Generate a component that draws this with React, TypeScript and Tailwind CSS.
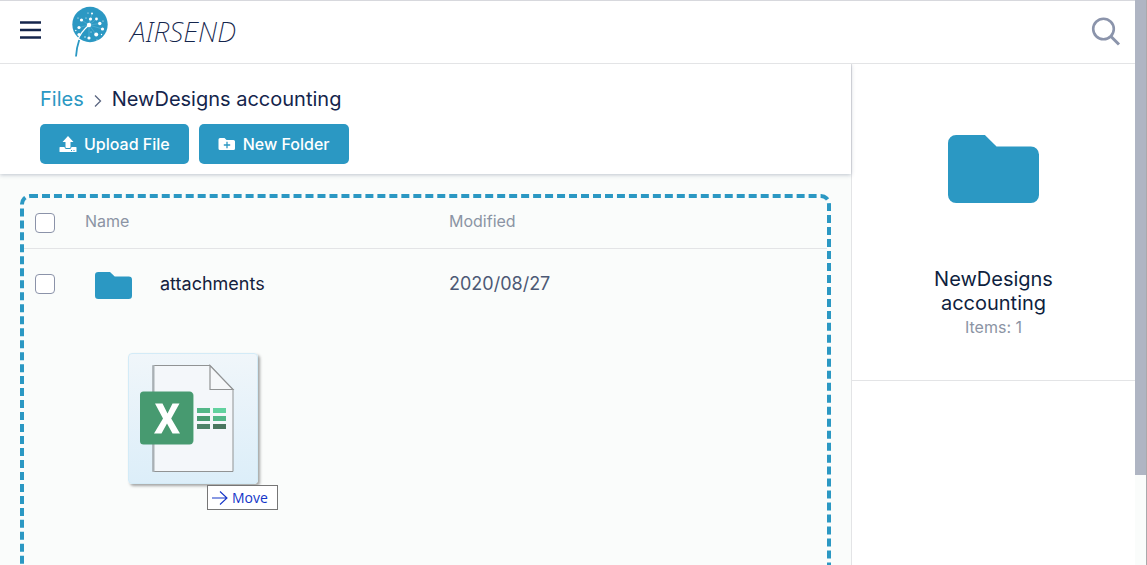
import type { ReactNode } from "react";

const files = [{ id: 1, name: "attachments", modified: "2020/08/27" }];

const seeds = [
  [10.5, 14, 1.6],
  [19.5, 13, 1.6],
  [25.5, 13, 1.4],
  [21, 7.5, 1],
  [28.8, 17.5, 1.7],
  [31.5, 23, 1.6],
  [25.2, 28.5, 2],
  [18, 32, 1.6],
  [8, 28.5, 1.6],
  [8, 21.5, 1.6],
];

const specks = [
  [4.8, 24.5, 0.7],
  [7, 12, 0.6],
  [15, 12, 0.6],
  [30.5, 28.5, 0.7],
  [26, 34, 0.6],
  [14, 31, 0.7],
  [17, 7, 0.6],
  [32, 15, 0.6],
  [20, 26, 0.5],
];

function Logo() {
  return (
    <svg width="38" height="51" viewBox="0 0 38 51" aria-hidden="true">
      <circle cx="19" cy="18.500" r="17.700" fill="#2b98c3" />
      <g stroke="#6cbbd8" strokeWidth="0.5">
        {seeds.map(([x, y]) => (
          <line key={`${x}-${y}`} x1="18" y1="19" x2={x} y2={y} />
        ))}
      </g>
      <g fill="#fff">
        {[...seeds, ...specks].map(([x, y, r]) => (
          <circle key={`${x}-${y}`} cx={x} cy={y} r={r} />
        ))}
        <circle cx="18" cy="19" r="2.200" />
      </g>
      <path d="M18 19C11 25 8 30 6.500 35" fill="none" stroke="#fff" strokeWidth="1.200" />
      <path d="M8.200 34C6.500 39 5.300 44 5 50.500" fill="none" stroke="#2b98c3" strokeWidth="1.800" />
    </svg>
  );
}

function FolderIcon({ className }: { className: string }) {
  return (
    <svg
      viewBox="0 0 90 68"
      className={className}
      preserveAspectRatio="none"
      fill="#2b98c3"
      aria-hidden="true"
    >
      <path d="M8 0H36.500L48 11.500H82A8 8 0 0 1 90 19.500V60A8 8 0 0 1 82 68H8A8 8 0 0 1 0 60V8A8 8 0 0 1 8 0Z" />
    </svg>
  );
}

function UploadIcon() {
  return (
    <svg width="18" height="16" viewBox="0 0 18 16" fill="#fff" aria-hidden="true">
      <path d="M9 0L14.500 6H11.500V11.200Q11.500 12 10.700 12H7.300Q6.500 12 6.500 11.200V6H3.500Z" />
      <path d="M1 11H5.500Q5.700 13 7.300 13H10.700Q12.300 13 12.500 11H17Q17.500 11 17.500 11.500V15.500Q17.500 16 17 16H1Q.5 16 .5 15.500V11.500Q.5 11 1 11Z" />
      <path d="M12 14h1v1h-1zM14.500 14h1v1h-1z" fill="#2b98c3" />
    </svg>
  );
}

function NewFolderIcon() {
  return (
    <svg width="18" height="16" viewBox="0 0 18 16" aria-hidden="true">
      <path
        d="M2 2H6.500L8.500 4H15.500Q17 4 17 5.500V12.500Q17 14 15.500 14H2Q.5 14 .5 12.500V3.500Q.5 2 2 2Z"
        fill="#fff"
      />
      <path d="M9 5.800V12.200M5.800 9H12.200" stroke="#2b98c3" strokeWidth="1.300" />
    </svg>
  );
}

function ActionButton({ icon, children }: { icon: ReactNode; children: ReactNode }) {
  return (
    <button
      type="button"
      className="flex h-10 items-center gap-[7px] rounded-[5px] bg-[#2b98c3] px-[19px] text-base font-medium text-white"
    >
      {icon}
      {children}
    </button>
  );
}

function Checkbox({ label }: { label: string }) {
  return (
    <input
      type="checkbox"
      aria-label={label}
      className="block size-5 appearance-none rounded border border-[#8b93a9] bg-white checked:bg-[#2b98c3]"
    />
  );
}

function Header() {
  return (
    <header className="relative z-20 flex h-16 shrink-0 items-center justify-between border-t border-b border-t-[#d7d8dd] border-b-[#e3e4e6] bg-white pr-3.5 pb-0.5 pl-5">
      <div className="flex items-center">
        <button type="button" aria-label="Menu" className="mr-7.5">
          <svg width="21" height="20" viewBox="0 0 21 20" stroke="#14254c" strokeWidth="2.400">
            <path d="M0 1.500H21M0 9H21M0 16.500H21" />
          </svg>
        </button>
        <a href="#" className="flex items-center gap-[21px]">
          <Logo />
          <span className="font-['Noto_Sans','Open_Sans',sans-serif] text-[28px] leading-8 font-extralight text-[#14254c] italic">
            AIRSEND
          </span>
        </a>
      </div>
      <button type="button" aria-label="Search">
        <svg width="30" height="30" viewBox="0 0 30 30" fill="none" stroke="#8b94ab">
          <circle cx="12.500" cy="13" r="10.300" strokeWidth="2.600" />
          <path d="M20 20.500L28 28.500" strokeWidth="3" />
        </svg>
      </button>
    </header>
  );
}

function Toolbar() {
  return (
    <div className="z-10 shrink-0 bg-white px-10 pt-[19px] pb-2.5 shadow-[0_1px_4px_rgba(20,37,76,0.25)]">
      <nav className="flex h-8 items-center text-xl">
        <a href="#" className="text-[#2b98c3]">
          Files
        </a>
        <svg width="8" height="14" viewBox="0 0 8 14" fill="none" className="mx-2.5 mt-1" aria-hidden="true">
          <path d="M1 1.500L6.500 7L1 12.500" stroke="#5b6680" strokeWidth="1.300" />
        </svg>
        <span className="text-[#14254c]">NewDesigns accounting</span>
      </nav>
      <div className="mt-[9px] flex gap-2.5">
        <ActionButton icon={<UploadIcon />}>Upload File</ActionButton>
        <ActionButton icon={<NewFolderIcon />}>New Folder</ActionButton>
      </div>
    </div>
  );
}

function FileTable() {
  return (
    <table className="w-full table-fixed text-left">
      <colgroup>
        <col className="w-[61px]" />
        <col className="w-[364px]" />
        <col />
      </colgroup>
      <thead>
        <tr className="h-[50px] border-b border-[#e3e4e6] text-base text-[#8b94a4]">
          <th className="pl-[11px]">
            <Checkbox label="Select all" />
          </th>
          <th className="pb-1 font-normal">Name</th>
          <th className="pb-1 font-normal">Modified</th>
        </tr>
      </thead>
      <tbody>
        {files.map((file) => (
          <tr key={file.id} className="h-[71px] text-lg">
            <td className="pl-[11px]">
              <Checkbox label={`Select ${file.name}`} />
            </td>
            <td className="text-[#14213d]">
              <a href="#" className="flex items-center pl-2.5">
                <FolderIcon className="mt-1 mr-7 h-[27px] w-[37px]" />
                {file.name}
              </a>
            </td>
            <td className="text-[#4c5975]">{file.modified}</td>
          </tr>
        ))}
      </tbody>
    </table>
  );
}

function DraggedFile() {
  return (
    <div className="absolute top-[179px] left-[128px] z-20">
      <div className="h-[131px] w-[130px] rounded-sm border border-[#d3ebf7] bg-linear-to-b from-[#f0f6fa] to-[#dceef9] shadow-[2px_2px_3px_rgba(0,0,0,0.35)]">
        <svg width="129" height="129" viewBox="0 0 129 129" aria-hidden="true">
          <path d="M24 11.500H81L104 35.500V117.500H24Z" fill="#f4f7fa" stroke="#919394" />
          <path d="M24.500 11V118" stroke="#a9b0b5" strokeWidth="2" />
          <path d="M81 11.500V35.500H104Z" fill="#f6f8fa" stroke="#919394" strokeWidth="1.200" />
          <rect x="13" y="39" width="52" height="50" rx="3" fill="#a5d2bb" />
          <rect x="11" y="37.500" width="53" height="53" rx="3.500" fill="#479a70" />
          <path
            d="M26 49.500H33.500L38.500 59.500L43.500 49.500H50.500L42.200 64.500L51 79.500H43.500L38 69.500L32.500 79.500H25L34 64.500Z"
            fill="#fff"
          />
          <path d="M68 54h13v5h-13z" fill="#53b788" />
          <path d="M84 54h13v5h-13z" fill="#62d29f" />
          <path d="M68 62h13v5h-13z" fill="#479a70" />
          <path d="M84 62h13v5h-13z" fill="#53b788" />
          <path d="M68 70h13v5h-13z" fill="#4f8369" />
          <path d="M84 70h13v5h-13z" fill="#4a765f" />
        </svg>
      </div>
      <div className="mt-px ml-[79px] flex h-[25px] w-[71px] items-center gap-1 border border-[#767676] bg-white pl-1 font-['Open_Sans','Noto_Sans',sans-serif] text-sm text-[#1435c8]">
        <svg width="16" height="14" viewBox="0 0 16 14" fill="none" stroke="#1435c8" strokeWidth="1.100" aria-hidden="true">
          <path d="M0 7H15M8 0.500L15 7L8 13.500" />
        </svg>
        Move
      </div>
    </div>
  );
}

function Details() {
  return (
    <aside className="w-[284px] shrink-0 border-l border-[#e3e4e6] bg-white">
      <div className="flex flex-col items-center border-b border-[#e3e4e6] px-16 pt-[71px] pb-[41px] text-center">
        <FolderIcon className="h-[68px] w-[91px]" />
        <h2 className="mt-16 text-xl leading-6 text-[#0f1f40]">NewDesigns accounting</h2>
        <p className="text-base leading-6 text-[#8b94a4]">Items: 1</p>
      </div>
    </aside>
  );
}

export default function App() {
  return (
    <div className="flex h-screen overflow-hidden bg-white font-[Inter,sans-serif]">
      <div className="flex min-w-0 flex-1 flex-col">
        <Header />
        <div className="flex min-h-0 flex-1">
          <main className="flex min-w-0 flex-1 flex-col">
            <Toolbar />
            <section className="relative min-h-0 flex-1 overflow-hidden bg-[#fafcfb] p-5">
              <div className="min-h-[600px] rounded-[10px] border-4 border-dashed border-[#2b98c3]">
                <FileTable />
              </div>
              <DraggedFile />
            </section>
          </main>
          <Details />
        </div>
      </div>
      <div className="w-3 shrink-0 border-r border-[#a9a9ab] bg-[#fafcfb]">
        <div className="h-[84%] bg-[#afb5c3]" />
      </div>
    </div>
  );
}
